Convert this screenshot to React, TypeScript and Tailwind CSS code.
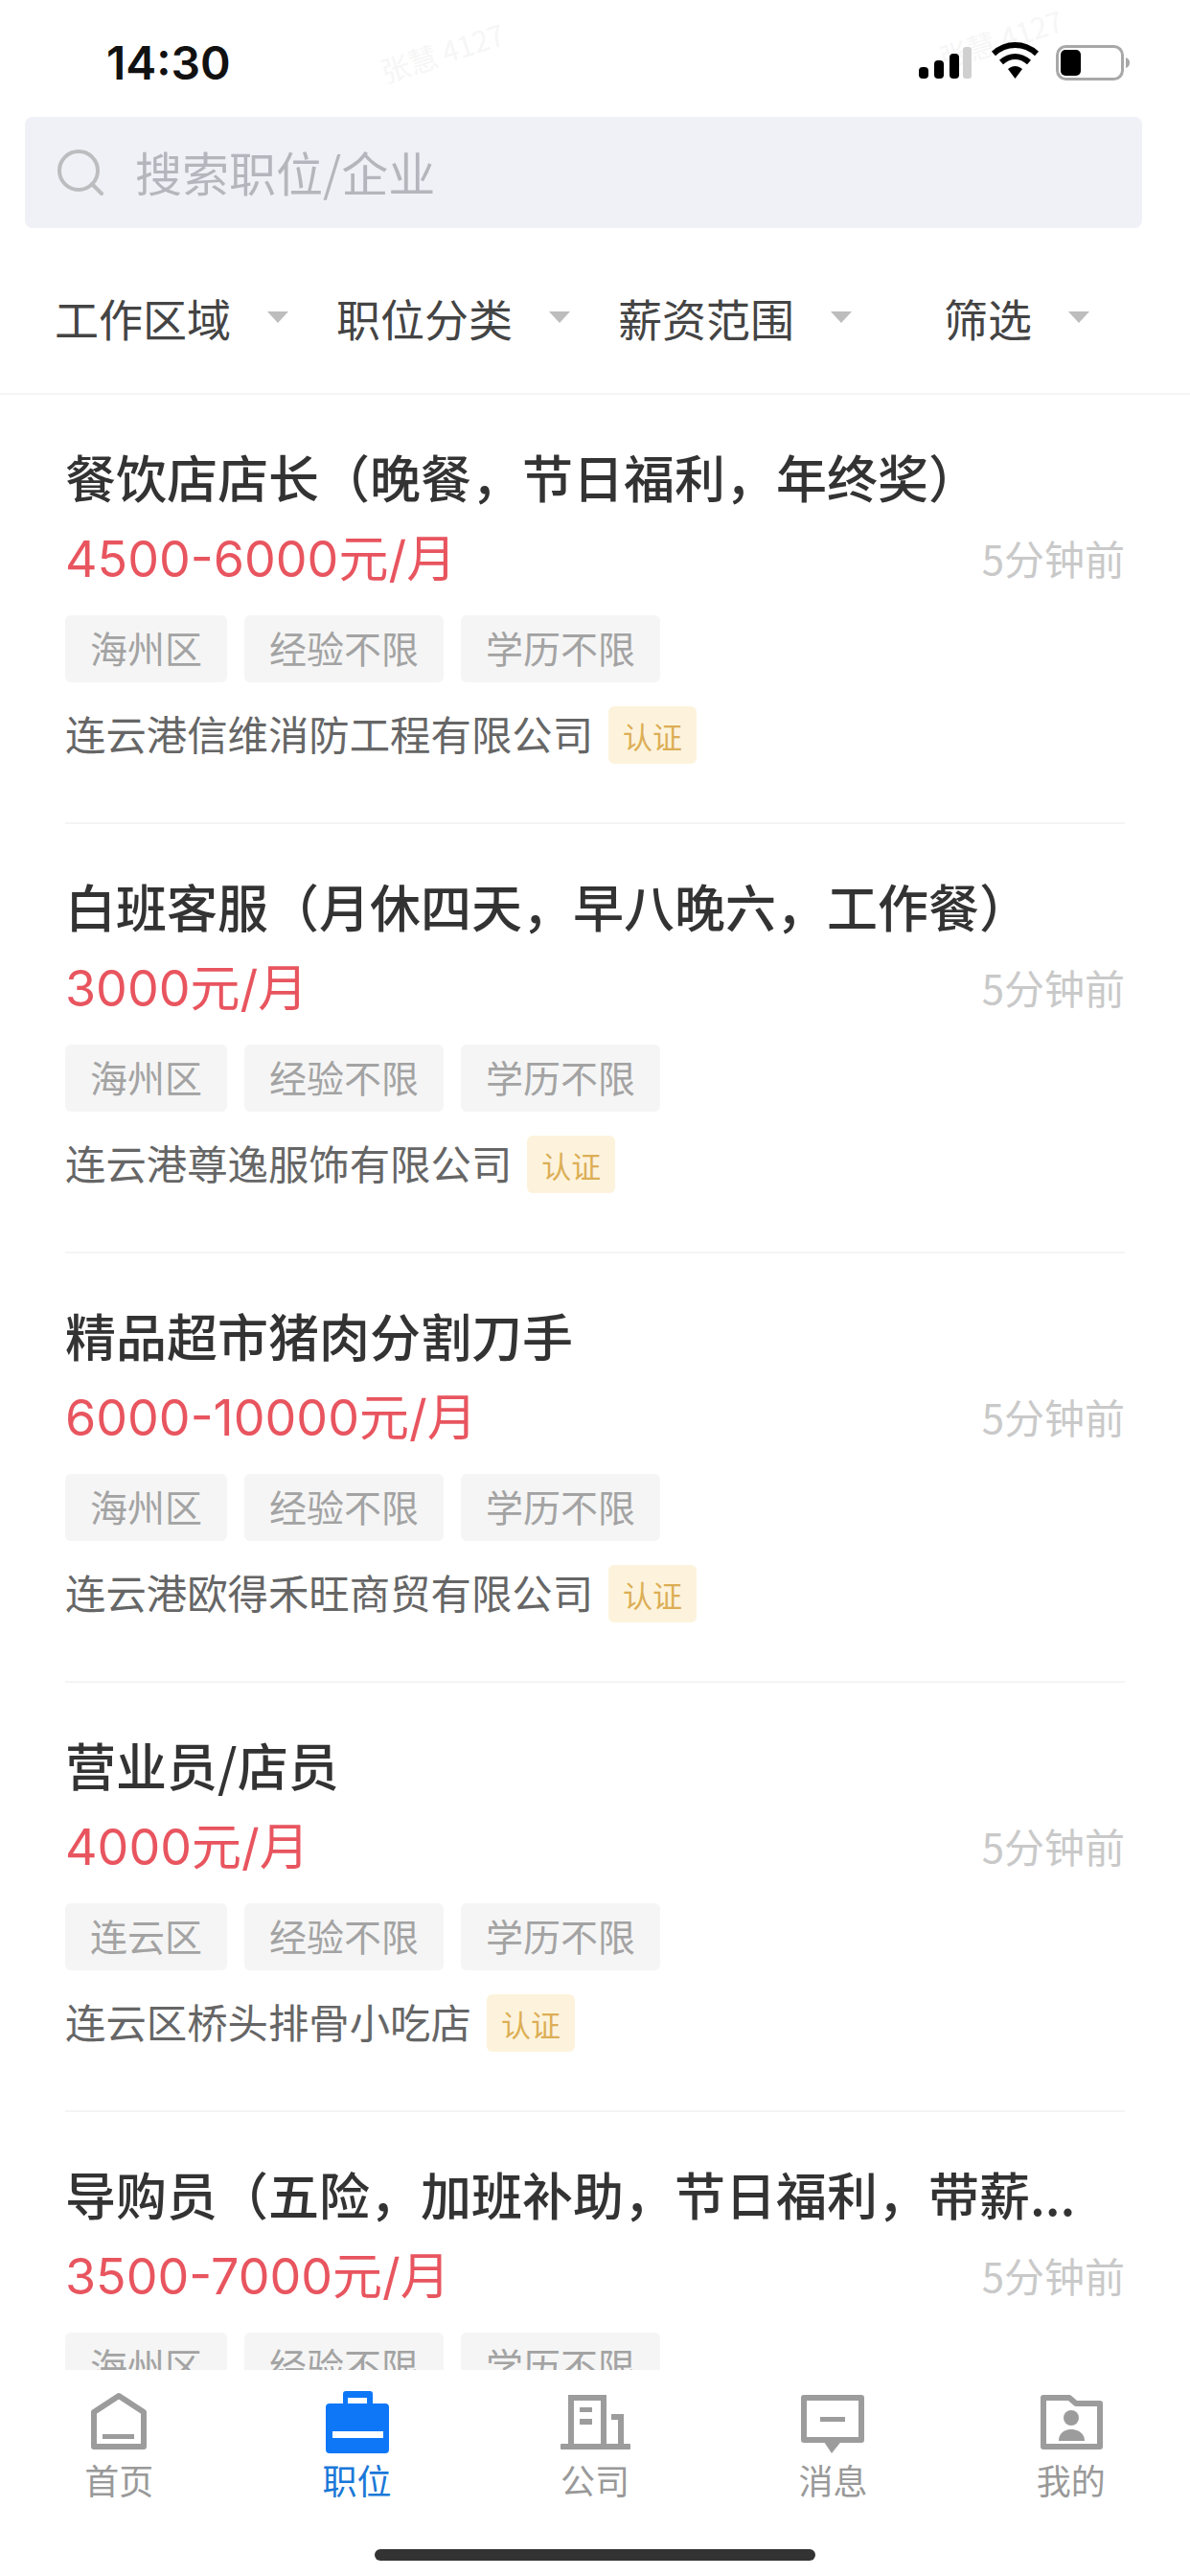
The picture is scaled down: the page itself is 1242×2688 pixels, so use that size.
import React from "react";

const jobs = [
  { title: "餐饮店店长（晚餐，节日福利，年终奖）", pay: "4500-6000元/月", area: "海州区", company: "连云港信维消防工程有限公司" },
  { title: "白班客服（月休四天，早八晚六，工作餐）", pay: "3000元/月", area: "海州区", company: "连云港尊逸服饰有限公司" },
  { title: "精品超市猪肉分割刀手", pay: "6000-10000元/月", area: "海州区", company: "连云港欧得禾旺商贸有限公司" },
  { title: "营业员/店员", pay: "4000元/月", area: "连云区", company: "连云区桥头排骨小吃店" },
  { title: "导购员（五险，加班补助，节日福利，带薪...", pay: "3500-7000元/月", area: "海州区", company: "连云港某某商贸有限公司" },
];

const filters = ["工作区域", "职位分类", "薪资范围", "筛选"];

function Tag({ children }: { children: React.ReactNode }) {
  return (
    <span className="flex h-[70px] items-center rounded-[6px] bg-[#f5f5f5] px-[26px] pb-[4px] text-[39px] leading-none text-[#a3a3a3]">
      {children}
    </span>
  );
}

function JobCard({ job, last }: { job: (typeof jobs)[number]; last: boolean }) {
  return (
    <div className={`h-[448px] shrink-0 pt-[49px] ${last ? "" : "border-b-2 border-[#f4f4f4]"}`}>
      <div className="h-[72px] text-[53px] font-medium leading-[72px] whitespace-nowrap text-[#333333]">{job.title}</div>
      <div className="mt-[19px] flex h-[60px] items-center justify-between">
        <span className="pt-[3px] font-['Inter','Noto_Sans_CJK_SC',sans-serif] text-[52px] leading-[57px] text-[#e8555f]">{job.pay}</span>
        <span className="text-[42px] leading-[60px] text-[#c9c9c9]">5分钟前</span>
      </div>
      <div className="mt-[30px] flex gap-[18px]">
        <Tag>{job.area}</Tag>
        <Tag>经验不限</Tag>
        <Tag>学历不限</Tag>
      </div>
      <div className="mt-[25px] flex items-center gap-[16px]">
        <span className="pb-[6px] text-[42.400px] leading-[53px] text-[#666666]">{job.company}</span>
        <span className="flex h-[60px] w-[92px] items-center justify-center rounded-[6px] bg-[#fdf3dc] text-[31px] leading-none text-[#dcae55]">
          认证
        </span>
      </div>
    </div>
  );
}

function HomeIcon() {
  return (
    <svg width="80" height="70" viewBox="0 0 80 70" fill="none">
      <path d="M14 60H66V24L40 7L14 24Z" stroke="#9c9c9c" strokeWidth="6" strokeLinejoin="round" />
      <rect x="23" y="47" width="33" height="5" fill="#9c9c9c" />
    </svg>
  );
}
function JobIcon() {
  return (
    <svg width="80" height="70" viewBox="0 0 80 70">
      <rect x="25" y="2" width="31" height="16" rx="3" fill="#0d77f7" />
      <rect x="30" y="9" width="20" height="6" fill="#ffffff" />
      <rect x="7" y="15" width="66" height="52" rx="4" fill="#0d77f7" />
      <rect x="14" y="44" width="53" height="7" fill="#ffffff" />
    </svg>
  );
}
function CompanyIcon() {
  return (
    <svg width="80" height="70" viewBox="0 0 80 70" fill="none">
      <path d="M15 58V9H49V58" stroke="#9c9c9c" strokeWidth="6" />
      <rect x="4" y="57" width="73" height="6" rx="1" fill="#9c9c9c" />
      <rect x="24" y="19" width="13" height="5" fill="#9c9c9c" />
      <rect x="24" y="31" width="13" height="6" fill="#9c9c9c" />
      <path d="M57 29H67V58" stroke="#9c9c9c" strokeWidth="6" />
    </svg>
  );
}
function MessageIcon() {
  return (
    <svg width="80" height="70" viewBox="0 0 80 70" fill="none">
      <rect x="10" y="9" width="60" height="44" stroke="#9c9c9c" strokeWidth="6" strokeLinejoin="round" />
      <path d="M29 52H51L39 67Z" fill="#9c9c9c" />
      <rect x="27" y="29" width="26" height="5" fill="#9c9c9c" />
    </svg>
  );
}
function MeIcon() {
  return (
    <svg width="80" height="70" viewBox="0 0 80 70" fill="none">
      <path d="M11 9H38L45 15H70V60H11Z" stroke="#9c9c9c" strokeWidth="6" strokeLinejoin="round" />
      <circle cx="40" cy="30" r="8" fill="#9c9c9c" />
      <path d="M27 54C27 46 33 42 40 42C47 42 54 46 54 54Z" fill="#9c9c9c" />
    </svg>
  );
}

const tabs = [
  { label: "首页", Icon: HomeIcon },
  { label: "职位", Icon: JobIcon, active: true },
  { label: "公司", Icon: CompanyIcon },
  { label: "消息", Icon: MessageIcon },
  { label: "我的", Icon: MeIcon },
];

function StatusIcons() {
  return (
    <svg width="240" height="50" viewBox="0 0 240 50">
      <rect x="0" y="27" width="10" height="12" rx="4" fill="#000" />
      <rect x="16" y="20" width="10" height="19" rx="4" fill="#000" />
      <rect x="32" y="13" width="10" height="26" rx="4" fill="#000" />
      <rect x="46" y="6" width="9" height="33" rx="3" fill="#d0d0d0" />
      <path d="M78 13C91 1 110 1 123 13" stroke="#000" strokeWidth="6" fill="none" />
      <path d="M86 22C95 14 106 14 115 22" stroke="#000" strokeWidth="6" fill="none" />
      <path d="M93 29C98 25 103 25 108 29L100.500 39Z" fill="#000" />
      <rect x="144.500" y="5.500" width="68" height="34" rx="9" fill="none" stroke="#a8a8a8" strokeWidth="3" />
      <rect x="148" y="9" width="21" height="27" rx="5" fill="#000" />
      <path d="M216 17C219 18 220 20 220 22C220 25 219 27 216 28Z" fill="#a8a8a8" />
    </svg>
  );
}

export default function App() {
  return (
    <div className="relative flex h-[2688px] w-[1242px] flex-col overflow-hidden bg-white font-['Noto_Sans_CJK_SC','Liberation_Sans',sans-serif]">
      <div className="absolute left-[395px] top-[32px] -rotate-[18deg] text-[30px] text-[#f6f6f6]">张慧 4127</div>
      <div className="absolute left-[978px] top-[18px] -rotate-[18deg] text-[30px] text-[#f6f6f6]">张慧 4127</div>

      <div className="relative flex h-[122px] shrink-0 items-start justify-between pl-[111px] pr-[43px]">
        <span className="mt-[36px] font-['Inter','Liberation_Sans',sans-serif] text-[48px] font-semibold leading-[60px] text-[#111111]">14:30</span>
        <div className="mt-[43px]">
          <StatusIcons />
        </div>
      </div>

      <div className="ml-[26px] flex h-[116px] w-[1166px] shrink-0 items-center rounded-[8px] bg-[#f0f1f6] pl-[33px]">
        <svg width="50" height="48" viewBox="0 0 50 48" fill="none">
          <circle cx="23" cy="22" r="20" stroke="#bdbdc0" strokeWidth="4" />
          <path d="M37 36L47 46" stroke="#bdbdc0" strokeWidth="4" strokeLinecap="round" />
        </svg>
        <span className="mb-[4px] ml-[32px] text-[49px] leading-none text-[#b5b6bd]">搜索职位/企业</span>
      </div>

      <div className="grid h-[174px] shrink-0 grid-cols-4 border-b-2 border-[#f5f5f5] pl-[32px] pr-[34px] pt-[14px]">
        {filters.map((f) => (
          <div key={f} className="flex items-center justify-center gap-[38px]">
            <span className="text-[46px] leading-none text-[#444444]">{f}</span>
            <span className="h-0 w-0 border-x-[11px] border-t-[12px] border-x-transparent border-t-[#bdbdbd]" />
          </div>
        ))}
      </div>

      <div className="flex min-h-0 flex-1 flex-col overflow-hidden px-[68px]">
        {jobs.map((job, i) => (
          <JobCard key={job.title} job={job} last={i === jobs.length - 1} />
        ))}
      </div>

      <div className="h-[215px] shrink-0 bg-white pt-[20px]">
        <div className="grid grid-cols-5">
          {tabs.map(({ label, Icon, active }) => (
            <div key={label} className="flex flex-col items-center">
              <Icon />
              <span className={`mt-[4px] text-[36px] leading-[40px] ${active ? "text-[#1a78d8]" : "text-[#999999]"}`}>{label}</span>
            </div>
          ))}
        </div>
        <div className="mx-auto mt-[53px] h-[12px] w-[460px] rounded-full bg-[#333333]" />
      </div>
    </div>
  );
}
